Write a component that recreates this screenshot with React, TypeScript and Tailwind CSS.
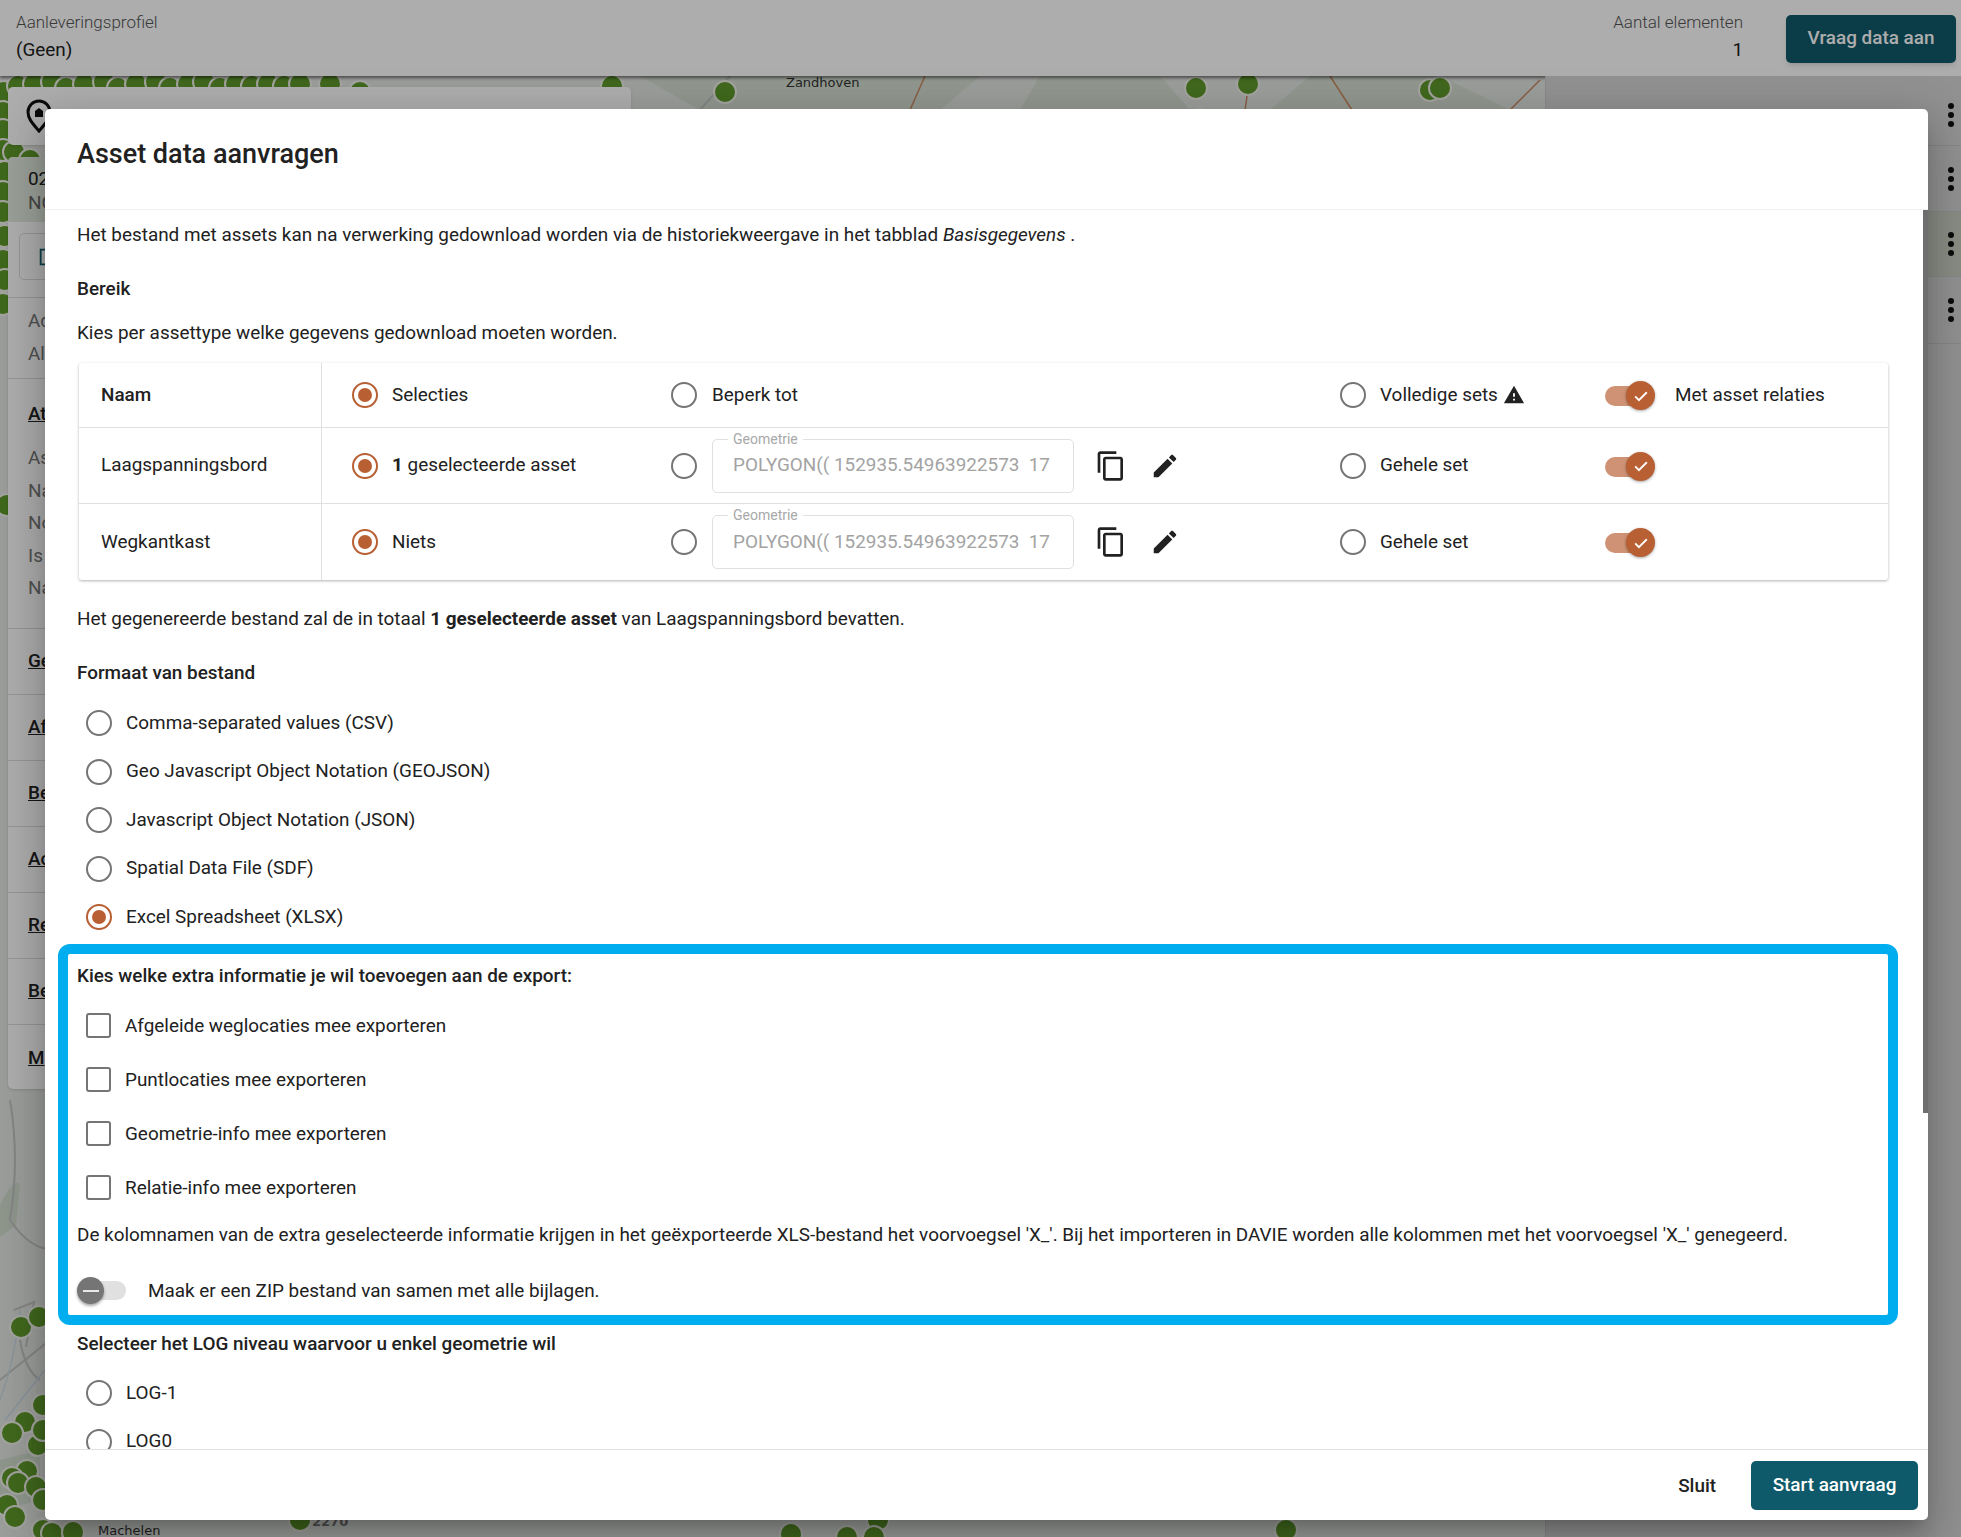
import { ReactNode } from 'react';

const dots: [number, number][] = [
  [4, 92], [18, 86], [34, 84], [52, 82], [66, 88], [84, 84], [104, 82], [118, 88], [136, 84], [156, 82], [170, 88], [188, 84], [204, 82], [220, 88], [236, 84], [252, 86], [268, 84], [284, 86], [300, 84], [330, 84], [360, 92],
  [3, 112], [3, 130], [3, 150], [5, 172], [3, 192], [3, 212], [5, 236], [3, 260], [5, 280], [3, 304], [14, 152], [30, 160],
  [612, 86], [725, 92], [1196, 88], [1248, 84], [1200, 120], [1430, 90], [1440, 88],
  [7, 505], [21, 1327], [39, 1317], [43, 1405], [25, 1422], [12, 1433], [38, 1445], [43, 1430], [27, 1471], [12, 1478], [18, 1483], [36, 1487], [43, 1500],
  [7, 1505], [15, 1517], [43, 1530], [52, 1533], [73, 1532], [300, 1520], [878, 1520], [791, 1534], [1286, 1530], [847, 1537], [874, 1537],
];

function MapLayer() {
  return (
    <svg className="absolute inset-0" width="1961" height="1461" viewBox="0 76 1961 1461">
      <rect x="0" y="76" width="1961" height="1461" fill="#e5e7e3" />
      <path d="M640 76l60 34h240l40-34zM1040 76h120l30 34h-170zM1310 76h130l70 34h-240z" fill="#d6dfd2" />
      <path d="M0 1205q15-30 20-20l-4 40-16 12zM0 1460l40-10v50l-40 10z" fill="#d2ddce" />
      <path d="M925 76l-15 34M1250 76l-5 34M1330 76l22 34M1540 80l-30 30" stroke="#c98a63" strokeWidth="1.5" fill="none" />
      <path d="M700 110l30-34M10 1100q10 60 0 120q20 30 45 30M0 1380l50-40M14 1310l20-8-8 45M20 1340q5 30 20 40" stroke="#c4c4c4" strokeWidth="2" fill="none" />
      <path d="M0 1400q15-40 20-90M5 1420l40-50" stroke="#c9dae4" strokeWidth="1.5" fill="none" />
      {dots.map(([x, y], i) => (
        <circle key={i} cx={x} cy={y} r="11" fill="#5f9a2b" stroke="#f1f1ec" strokeWidth="2" />
      ))}
      <text x="786" y="87" fontFamily="DejaVu Sans, sans-serif" fontSize="13" fill="#333">Zandhoven</text>
      <text x="98" y="1535" fontFamily="DejaVu Sans, sans-serif" fontSize="13" fill="#333">Machelen</text>
      <text x="312" y="1526" fontFamily="DejaVu Sans, sans-serif" fontSize="13" fontWeight="700" fill="#777">2270</text>
    </svg>
  );
}

function Radio({ checked = false }: { checked?: boolean }) {
  return (
    <span className={`flex h-[26px] w-[26px] shrink-0 items-center justify-center rounded-full border-[2px] ${checked ? 'border-[#b85f33]' : 'border-[#757575]'}`}>
      {checked && <span className="h-[14px] w-[14px] rounded-full bg-[#b85f33]" />}
    </span>
  );
}

function Toggle() {
  return (
    <span className="relative mt-[2px] block h-[20px] w-[49px]">
      <span className="absolute left-0 top-0 h-[20px] w-[40px] rounded-full bg-[#cf9274]" />
      <span className="absolute left-[21px] top-[-5px] flex h-[29px] w-[29px] items-center justify-center rounded-full bg-[#b85f33] shadow-[0_1px_3px_rgba(0,0,0,0.35)]">
        <svg width="20" height="20" viewBox="0 0 24 24" fill="none" stroke="#fff" strokeWidth="2.2">
          <path d="M5 12.5l4.5 4.5L19 7.5" />
        </svg>
      </span>
    </span>
  );
}

function CopyIcon() {
  return (
    <svg width="32" height="32" viewBox="0 0 24 24" fill="#212121">
      <path d="M16 1H4c-1.1 0-2 .9-2 2v14h2V3h12V1zm3 4H8c-1.1 0-2 .9-2 2v14c0 1.1.9 2 2 2h11c1.1 0 2-.9 2-2V7c0-1.1-.9-2-2-2zm0 16H8V7h11v14z" />
    </svg>
  );
}

function EditIcon() {
  return (
    <svg width="30" height="30" viewBox="0 0 24 24" fill="#212121">
      <path d="M3 17.25V21h3.75L17.81 9.94l-3.75-3.75L3 17.25zM20.71 7.04c.39-.39.39-1.02 0-1.41l-2.34-2.34c-.39-.39-1.02-.39-1.41 0l-1.83 1.83 3.75 3.75 1.83-1.83z" />
    </svg>
  );
}

function GeometryField() {
  return (
    <div className="flex items-center">
      <div className="relative ml-[15px] flex h-[54px] w-[362px] items-center rounded-[5px] border border-[#e0e0e0] pl-[20px]">
        <span className="absolute left-[15px] top-[-9px] bg-white px-[5px] text-[14px] leading-[16px] text-[#a8a8a8]">Geometrie</span>
        <span className="w-[318px] overflow-hidden whitespace-pre text-[#a3a3a3]">POLYGON(( 152935.54963922573  17</span>
      </div>
      <div className="ml-[20px] flex w-[34px] justify-center"><CopyIcon /></div>
      <div className="ml-[20px] flex w-[34px] justify-center"><EditIcon /></div>
    </div>
  );
}

function TableRow({ name, first, second, third, fourth, bold, last }: { name: ReactNode; first: ReactNode; second: ReactNode; third: ReactNode; fourth?: ReactNode; bold?: boolean; last?: boolean }) {
  return (
    <div className={`grid grid-cols-[243px_349px_669px_265px_1fr] ${last ? '' : 'border-b border-[#e0e0e0]'}`}>
      <div className={`flex items-center border-r border-[#e0e0e0] pl-[22px] ${bold ? 'font-medium' : ''}`}>{name}</div>
      <div className="flex items-center gap-[14px] pl-[30px]"><Radio checked /><span>{first}</span></div>
      <div className="flex items-center"><Radio />{second}</div>
      <div className="flex items-center gap-[14px]"><Radio />{third}</div>
      <div className="flex items-center gap-[21px]"><Toggle />{fourth}</div>
    </div>
  );
}

function RadioRow({ label, checked }: { label: string; checked?: boolean }) {
  return (
    <div className="flex h-[48.5px] items-center gap-[14px] pl-[9px]">
      <Radio checked={checked} />
      <span>{label}</span>
    </div>
  );
}

function CheckRow({ label }: { label: string }) {
  return (
    <div className="flex h-[54px] items-center gap-[14px] pl-[9px]">
      <span className="h-[25px] w-[25px] shrink-0 rounded-[3px] border-[2px] border-[#757575]" />
      <span className="mt-[2px]">{label}</span>
    </div>
  );
}

function LeftPanel() {
  const sections = ['Ge', 'Af', 'Be', 'Ac', 'Re', 'Be', 'M'];
  return (
    <div className="relative z-10 ml-[8px] flex w-[623px] flex-col">
      <div className="mt-[11px] flex h-[58px] items-center rounded-[5px] bg-white pl-[17px] shadow-sm">
        <svg width="28" height="34" viewBox="0 0 28 34" fill="none" stroke="#111" strokeWidth="3">
          <path d="M14 32C8 25 3 20 3 13a11 11 0 0122 0c0 7-5 12-11 19z" />
          <path d="M10 18v-6l4-3 4 3v6z" fill="#111" stroke="none" />
        </svg>
      </div>
      <div className="mt-[12px] flex h-[932px] flex-col rounded-[5px] bg-white shadow-sm">
        <div className="h-[65px] shrink-0 rounded-t-[5px] bg-[#e4ece0] pl-[20px] pt-[10px] leading-[24px]">
          <div>02</div>
          <div className="text-[#666]">NO</div>
        </div>
        <div className="ml-[11px] mt-[11px] flex h-[47px] w-[200px] shrink-0 items-center rounded-[5px] border border-[#ddd] pl-[17px]">
          <svg width="22" height="22" viewBox="0 0 24 24" fill="#15606f"><path d="M3 3h11v2H5v14h14v-9h2v11H3zM9 13l9-9 3 3-9 9H9z" /></svg>
        </div>
        <div className="mt-[17px] flex h-[82px] shrink-0 flex-col justify-center gap-[4.5px] border-y border-[#ddd] pl-[20px] text-[#777]">
          <div>Ad</div>
          <div>All</div>
        </div>
        <div className="h-[250px] shrink-0 border-b border-[#ddd] pl-[20px] pt-[21px]">
          <div className="font-medium text-[#222] underline">At</div>
          <div className="mt-[20px] flex flex-col gap-[12.5px] leading-[20px] text-[#777]">
            <div>As</div><div>Na</div><div>No</div><div>Is</div><div>Na</div>
          </div>
        </div>
        {sections.map((label, i) => (
          <div key={i} className="flex h-[66px] shrink-0 items-center border-b border-[#ddd] pl-[20px] font-medium text-[#222] underline last:border-b-0">{label}</div>
        ))}
      </div>
    </div>
  );
}

function RightPanel() {
  return (
    <div className="relative z-10 flex h-full w-[416px] flex-col border-l border-[#ccc] bg-[#d6d6d6]">
      {[70, 66, 65, 67].map((height, i) => (
        <div key={i} style={{ height }} className={`flex items-center justify-end border-b border-[#c6c6c6] pr-[7px] ${i === 0 ? 'pt-[8px]' : ''} ${i === 2 ? 'bg-[#cad0c3]' : ''}`}>
          <span className="flex flex-col gap-[3px]">
            <span className="h-[6px] w-[6px] rounded-full bg-[#111]" />
            <span className="h-[6px] w-[6px] rounded-full bg-[#111]" />
            <span className="h-[6px] w-[6px] rounded-full bg-[#111]" />
          </span>
        </div>
      ))}
    </div>
  );
}

export default function App() {
  const geom = <GeometryField />;
  return (
    <div className="relative flex h-[1537px] w-[1961px] flex-col overflow-hidden font-['Roboto',sans-serif] text-[18.9px] text-[#212121]">
      <header className="relative z-10 flex h-[76px] shrink-0 items-center justify-between bg-white pl-[16px] pr-[5px] shadow-[0_2px_3px_rgba(0,0,0,0.5)]">
        <div className="-mt-[4px] leading-[27px]">
          <div className="text-[17px] font-light text-[#555]">Aanleveringsprofiel</div>
          <div>(Geen)</div>
        </div>
        <div className="flex items-center gap-[43px]">
          <div className="-mt-[4px] text-right leading-[27px]">
            <div className="text-[17px] font-light text-[#555]">Aantal elementen</div>
            <div>1</div>
          </div>
          <div className="mt-[1px] flex h-[48px] w-[170px] items-center justify-center rounded-[5px] bg-[#0f5a6a] font-medium text-white shadow-md">Vraag data aan</div>
        </div>
      </header>

      <main className="relative flex flex-1 justify-between">
        <MapLayer />
        <LeftPanel />
        <RightPanel />
      </main>

      <div className="absolute inset-0 z-20 bg-black/32" />

      <div className="absolute left-[45px] top-[109px] z-30 flex h-[1411px] w-[1883px] flex-col overflow-hidden rounded-[5px] bg-white shadow-[0_11px_15px_-7px_rgba(0,0,0,0.2),0_24px_38px_3px_rgba(0,0,0,0.14),0_9px_46px_8px_rgba(0,0,0,0.12)]">
        <div className="flex h-[101px] shrink-0 items-start border-b border-[#f1f1f1] pl-[32px] pt-[28px] text-[27px] font-medium leading-[34px]">
          Asset data aanvragen
        </div>

        <div className="relative flex-1 overflow-hidden pl-[32px] pr-[40px]">
          <div className="flex h-[50px] items-center">
            <span>Het bestand met assets kan na verwerking gedownload worden via de historiekweergave in het tabblad <em>Basisgegevens</em> .</span>
          </div>
          <div className="flex h-[58px] items-center font-medium">Bereik</div>
          <div className="flex h-[30px] items-center">Kies per assettype welke gegevens gedownload moeten worden.</div>

          <div className="ml-[2px] mt-[15px] grid w-[1809px] grid-rows-[65px_76px_76px] rounded-[3px] shadow-[0_1px_3px_rgba(0,0,0,0.3)]">
            <TableRow name="Naam" bold first="Selecties" second={<span className="ml-[15px]">Beperk tot</span>} third={
              <span className="flex items-center gap-[5px]">Volledige sets
                <svg width="22" height="22" viewBox="0 0 24 24" fill="#212121"><path d="M1 21h22L12 2 1 21zm12-3h-2v-2h2v2zm0-4h-2v-4h2v4z" /></svg>
              </span>
            } fourth="Met asset relaties" />
            <TableRow name="Laagspanningsbord" first={<><b className="font-bold">1</b> geselecteerde asset</>} second={geom} third="Gehele set" />
            <TableRow name="Wegkantkast" first="Niets" second={geom} third="Gehele set" last />
          </div>

          <div className="flex h-[78px] items-center">
            <span>Het gegenereerde bestand zal de in totaal <b className="font-bold">1 geselecteerde asset</b> van Laagspanningsbord bevatten.</span>
          </div>
          <div className="flex h-[30px] items-center font-medium">Formaat van bestand</div>

          <div className="pt-[10.75px]">
            <RadioRow label="Comma-separated values (CSV)" />
            <RadioRow label="Geo Javascript Object Notation (GEOJSON)" />
            <RadioRow label="Javascript Object Notation (JSON)" />
            <RadioRow label="Spatial Data File (SDF)" />
            <RadioRow label="Excel Spreadsheet (XLSX)" checked />
          </div>

          <div className="mt-[13px] flex h-[44px] items-center font-medium">Kies welke extra informatie je wil toevoegen aan de export:</div>
          <CheckRow label="Afgeleide weglocaties mee exporteren" />
          <CheckRow label="Puntlocaties mee exporteren" />
          <CheckRow label="Geometrie-info mee exporteren" />
          <CheckRow label="Relatie-info mee exporteren" />
          <div className="flex h-[42px] items-center whitespace-nowrap">
            De kolomnamen van de extra geselecteerde informatie krijgen in het geëxporteerde XLS-bestand het voorvoegsel 'X_'. Bij het importeren in DAVIE worden alle kolommen met het voorvoegsel 'X_' genegeerd.
          </div>
          <div className="flex h-[69px] items-center gap-[22px]">
            <span className="relative block h-[19px] w-[49px]">
              <span className="absolute right-0 top-0 h-[19px] w-[40px] rounded-full bg-[#e0e0e0]" />
              <span className="absolute left-0 top-[-4px] flex h-[27px] w-[27px] items-center justify-center rounded-full bg-[#757575] shadow-[0_2px_3px_rgba(0,0,0,0.35)]">
                <span className="h-[2px] w-[16px] bg-[#e8e8e8]" />
              </span>
            </span>
            <span>Maak er een ZIP bestand van samen met alle bijlagen.</span>
          </div>
          <div className="flex h-[37px] items-center font-medium">Selecteer het LOG niveau waarvoor u enkel geometrie wil</div>
          <div className="pt-[6.5px]">
            <RadioRow label="LOG-1" />
            <RadioRow label="LOG0" />
          </div>

          <div className="absolute right-0 top-0 h-[903px] w-[5px] bg-[#6e6e6e]" />
        </div>

        <div className="flex h-[71px] shrink-0 items-center justify-end gap-[35px] border-t border-[#e0e0e0] pr-[10px]">
          <span className="mt-[2px] font-medium">Sluit</span>
          <div className="flex h-[49px] w-[167px] items-center justify-center rounded-[5px] bg-[#0f5a6a] pt-[1px] font-medium text-white">Start aanvraag</div>
        </div>

        <div className="pointer-events-none absolute left-[13px] top-[835px] h-[381px] w-[1840px] rounded-[12px] border-[10px] border-[#00aeef]" />
      </div>
    </div>
  );
}
